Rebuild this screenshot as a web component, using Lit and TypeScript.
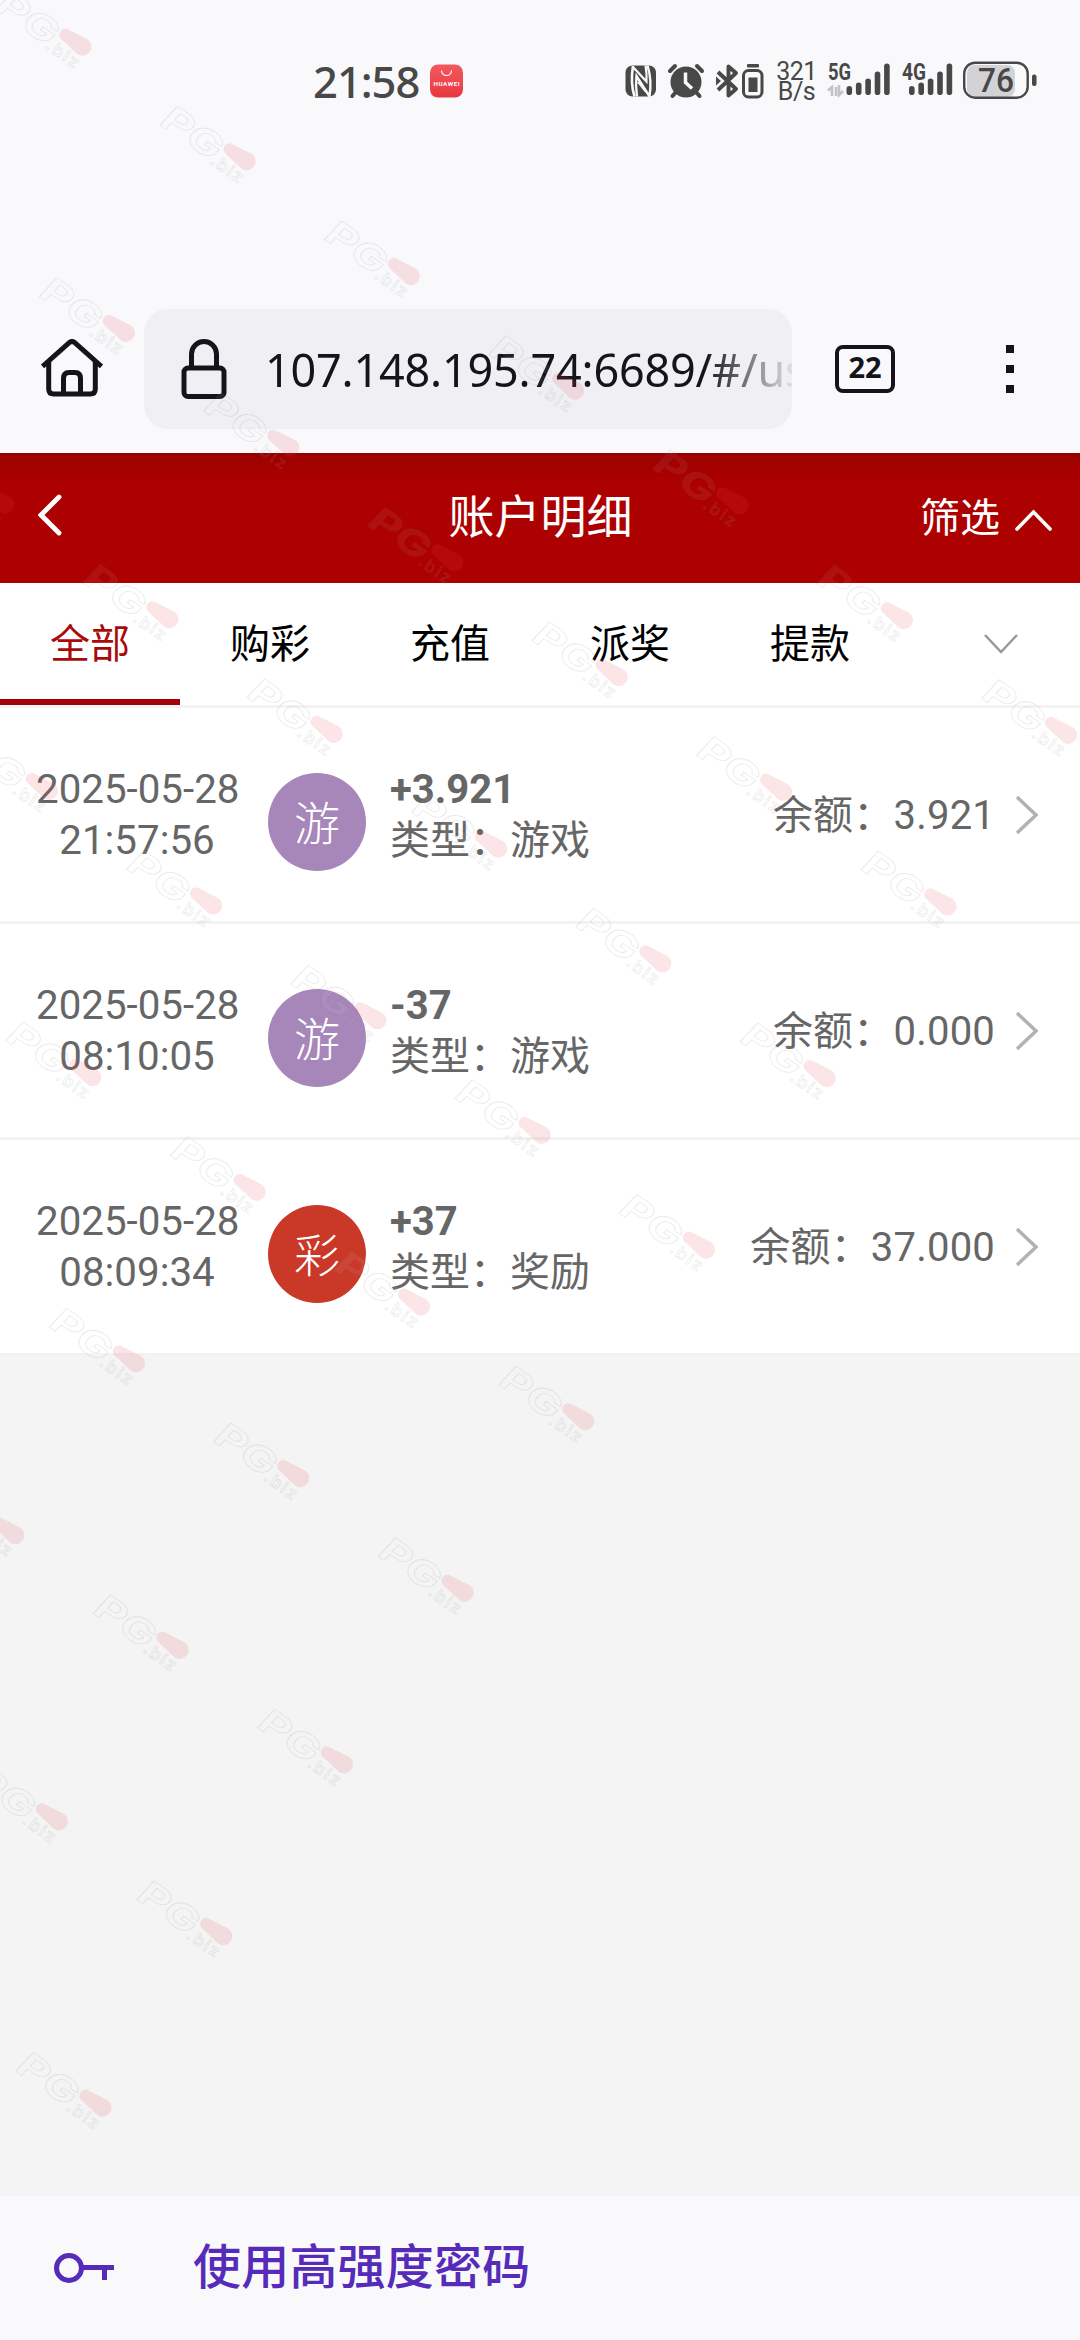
import { LitElement, html, css, svg } from "lit";
import { customElement, property } from "lit/decorators.js";

interface Entry {
  date: string;
  time: string;
  badge: string;
  kind: "game" | "lottery";
  amount: string;
  type: string;
  balance: string;
}

const ENTRIES: Entry[] = [
  { date: "2025-05-28", time: "21:57:56", badge: "游", kind: "game", amount: "+3.921", type: "游戏", balance: "3.921" },
  { date: "2025-05-28", time: "08:10:05", badge: "游", kind: "game", amount: "-37", type: "游戏", balance: "0.000" },
  { date: "2025-05-28", time: "08:09:34", badge: "彩", kind: "lottery", amount: "+37", type: "奖励", balance: "37.000" },
];

const TABS = ["全部", "购彩", "充值", "派奖", "提款"];

@customElement("status-bar")
class StatusBar extends LitElement {
  static styles = css`
    :host { display: block; height: 290px; color: #484848; font-family: "Noto Sans", sans-serif; }
    .bar { display: flex; align-items: center; height: 162px; padding-left: 313px; box-sizing: border-box; }
    .time { width: 117px; font: 500 43.5px/60px "Noto Sans", sans-serif; letter-spacing: -1px; white-space: nowrap; }
    .icons { display: block; flex: none; overflow: visible; }
    .app { margin-right: 162px; }
    .rate { width: 43px; margin-left: 3px; font: 400 25px/20px Roboto, sans-serif; text-align: center; padding-top: 1px; letter-spacing: -0.5px; white-space: nowrap; }
    .signals { margin-left: -3px; }
    svg text { font-family: "Roboto", sans-serif; }
    .net { font-size: 23px; font-weight: 700; }
    .pct { font-size: 34px; font-weight: 500; }
    .brand { font-size: 6.2px; font-weight: 700; }
  `;

  private bars(x: number, tops: number[]) {
    return tops.map((t, i) => svg`<rect x=${x + i * 9.4} y=${t} width="5.6" height=${35 - t} rx="2.8"></rect>`);
  }

  render() {
    return html`<div class="bar">
      <div class="time">21:58</div>
      <svg class="icons app" width="33" height="34" viewBox="0 0 33 34">
        <defs><linearGradient id="g" x2="0" y2="1"><stop stop-color="#f25a5e"/><stop offset="1" stop-color="#e93741"/></linearGradient></defs>
        <rect y="0.5" width="33" height="33" rx="8" fill="url(#g)"/>
        <path d="M11.500 6.500a5 5 0 0 0 10 0" fill="none" stroke="#fff" stroke-width="1.100"/>
        <text class="brand" x="16.500" y="21.500" text-anchor="middle" fill="#fff" textLength="26">HUAWEI</text>
      </svg>
      <svg class="icons" width="147" height="40" viewBox="0 0 147 40" fill="#484848">
        <rect x="0.500" y="4.500" width="30.500" height="31" rx="7"/>
        <path d="M8 5C6.500 14 6.500 26 9.500 35.500" fill="none" stroke="#f9f9fb" stroke-width="2.600"/>
        <path d="M7.500 5.500L21.500 20.500C21.800 15 21.500 10 20.500 4.500" fill="none" stroke="#f9f9fb" stroke-width="2.200"/>
        <path d="M12 35.500C11 29 10.800 21 11.500 15L24.500 35.500C26 26 25.500 14 22.500 4.500" fill="none" stroke="#f9f9fb" stroke-width="2.400"/>
        <path d="M13 21L21 31" fill="none" stroke="#f9f9fb" stroke-width="2"/>
        <circle cx="61" cy="21" r="15.500"/>
        <path d="M51 31L47.500 35M71 31l3.500 4M45 10l5-5M77 10l-5-5" stroke="#484848" stroke-width="4" stroke-linecap="round"/>
        <path d="M60.500 11.500V21.500L67 27.500" fill="none" stroke="#f9f9fb" stroke-width="3.500"/>
        <path d="M93 11L111 28L103.500 34.500V5.500L111 12L93 29" fill="none" stroke="#484848" stroke-width="3.900" stroke-linejoin="round"/>
        <path d="M91 15.500l5 4.500-5 4.500z"/>
        <rect x="118.500" y="9.500" width="18.500" height="26.500" rx="5" fill="none" stroke="#484848" stroke-width="3"/>
        <rect x="122" y="3" width="12" height="3.500" rx="1"/>
        <rect x="123.500" y="16.500" width="9" height="14.500"/>
      </svg>
      <div class="rate">321<br />B/s</div>
      <svg class="icons signals" width="230" height="42" viewBox="0 0 230 42" fill="#484848">
        <text class="net" x="13" y="20" textLength="23" lengthAdjust="spacingAndGlyphs">5G</text>
        <path d="M17 36V27l-4 3.500M21 36V27M24 25v10l4-4" fill="none" stroke="#c3c3c5" stroke-width="2.600"/>
        <g>${this.bars(31.5, [26, 22.500, 18.500, 11.500, 3.500])}</g>
        <text class="net" x="87" y="20" textLength="24" lengthAdjust="spacingAndGlyphs">4G</text>
        <g>${this.bars(94, [26, 22.500, 18.500, 11.500, 3.500])}</g>
        <rect x="152" y="5" width="48" height="32" rx="8" fill="#d3d3d5"/>
        <rect x="149.200" y="2.700" width="63.500" height="35" rx="11" fill="none" stroke="#484848" stroke-width="2.400"/>
        <rect x="217" y="14.500" width="4.500" height="11.500" rx="2"/>
        <text class="pct" x="163" y="32" textLength="36" lengthAdjust="spacingAndGlyphs">76</text>
      </svg>
    </div>`;
  }
}

@customElement("address-bar")
class AddressBar extends LitElement {
  static styles = css`
    :host { display: flex; height: 163px; box-sizing: border-box; padding: 19px 0 24px 41px; align-items: center; color: #15141a; }
    svg { display: block; flex: none; }
    .url {
      display: flex; align-items: center; width: 648px; height: 120px; margin-left: 41px; flex: none;
      background: #f0f0f4; border-radius: 24px; padding-left: 37px; box-sizing: border-box; overflow: hidden;
    }
    .text {
      flex: 1; margin-left: 38px; font: 400 45px/64px "Noto Sans", sans-serif; white-space: nowrap; overflow: hidden;
      letter-spacing: -0.2px; padding-top: 2px;
      -webkit-mask-image: linear-gradient(90deg, #000 440px, rgba(0, 0, 0, 0.08) 527px);
      mask-image: linear-gradient(90deg, #000 440px, rgba(0, 0, 0, 0.08) 527px);
    }
    .count {
      display: flex; align-items: center; justify-content: center; width: 60px; height: 48px; margin-left: 43px;
      border: 4px solid #15141a; border-radius: 8px; box-sizing: border-box; font: 700 29px/40px "Noto Sans", sans-serif;
      padding-bottom: 4px;
    }
    .menu { display: flex; flex-direction: column; gap: 12px; margin-left: 111px; }
    .dot { width: 8px; height: 8px; background: #15141a; }
  `;

  render() {
    return html`
      <svg width="62" height="60" viewBox="0 0 62 60" fill="none" stroke="#15141a" stroke-width="5">
        <path d="M1.500 27.500L28.500 3.500Q31 1.500 33.500 3.500L60.500 27.500"/>
        <path d="M7.700 23V50Q7.700 55 12.700 55H49.300Q54.300 55 54.300 50V23"/>
        <path d="M22.500 54V39.500Q22.500 33.500 28 33.500H34Q39.500 33.500 39.500 39.500V54"/>
      </svg>
      <div class="url">
        <svg width="46" height="62" viewBox="0 0 46 62" fill="none" stroke="#15141a" stroke-width="5">
          <rect x="3" y="30" width="40" height="28.500" rx="4"/>
          <path d="M10.500 30V16a12.500 12.500 0 0 1 25 0V30"/>
        </svg>
        <div class="text">107.148.195.74:6689/#/us</div>
      </div>
      <div class="count">22</div>
      <div class="menu"><div class="dot"></div><div class="dot"></div><div class="dot"></div></div>
    `;
  }
}

@customElement("record-row")
class RecordRow extends LitElement {
  @property({ attribute: false }) entry!: Entry;

  static styles = css`
    :host {
      display: flex; height: 216px; box-sizing: border-box; border-bottom: 3px solid #f3f3f3; background: #fff;
      color: #666; font: 400 40px/51px Roboto, "Noto Sans CJK SC", sans-serif; padding: 0 41px 0 36px;
    }
    .when { width: 202px; text-align: center; padding-top: 56px; font-size: 40.3px; white-space: nowrap; }
    .badge {
      width: 98px; height: 98px; margin: 65px 24px 0 30px; border-radius: 50%; color: #fff; box-sizing: border-box;
      font: 300 46px/94px "Noto Sans CJK SC", sans-serif; text-align: center;
    }
    .game { background: #a786ba; }
    .lottery { background: #ca3927; }
    .info { flex: 1; padding-top: 56px; }
    .amount { font-weight: 700; }
    .balance { padding-top: 82px; letter-spacing: 0.2px; margin-right: 20px; }
    svg { display: block; margin-top: 86px; }
  `;

  render() {
    const e = this.entry;
    return html`
      <div class="when">${e.date}<br />${e.time}</div>
      <div class="badge ${e.kind}">${e.badge}</div>
      <div class="info"><div class="amount">${e.amount}</div><div>类型：${e.type}</div></div>
      <div class="balance">余额：${e.balance}</div>
      <svg width="24" height="42" viewBox="0 0 24 42" fill="none" stroke="#b2b2b2" stroke-width="3.500">
        <path d="M2 3L21 21L2 39"/>
      </svg>
    `;
  }
}

/* Faint brand stamps laid over the whole page on a slanted lattice. */
@customElement("brand-stamps")
class BrandStamps extends LitElement {
  static styles = css`
    :host { position: absolute; inset: 0; pointer-events: none; overflow: hidden; }
    svg { display: block; }
    text { font-family: Inter, sans-serif; font-weight: 700; fill: rgba(255, 255, 255, 0.08); stroke: rgba(110, 110, 110, 0.13); stroke-width: 1; }
    .big { font-size: 35px; }
    .small { font-size: 17px; font-weight: 600; }
    .pill { fill: rgba(236, 70, 85, 0.14); }
  `;

  /* Each lattice line: [line index, first step, last step]. */
  private lines: number[][] = [
    [-5, -10, -4], [-4, -8, -3], [-3, -7, -2], [-2, -5, -1], [-1, -3, 0], [0, -1, 1], [1, 0, 2], [2, 2, 3], [3, 4, 4],
  ];

  render() {
    const marks = this.lines.flatMap(([n, from, to]) =>
      Array.from({ length: to - from + 1 }, (_, i) => [
        293 + 164.3 * (from + i) - 285 * n,
        1473 + 114.7 * (from + i) + 56.9 * n,
      ]),
    );
    return html`<svg width="1080" height="2340" viewBox="0 0 1080 2340">
      ${marks.map(([x, y]) => svg`<g transform="translate(${x} ${y}) rotate(35)">
        <text class="big" transform="translate(-86 20) skewX(-8)" textLength="66" lengthAdjust="spacingAndGlyphs">PG</text>
        <path class="pill" d="M-12 -6L9 -9A9 9 0 0 1 9 9L-12 6A6 6 0 0 1 -12 -6Z"></path>
        <text class="small" x="-21" y="23" textLength="36">.biz</text>
      </g>`)}
    </svg>`;
  }
}

@customElement("app-root")
class AppRoot extends LitElement {
  static styles = css`
    :host {
      display: flex; flex-direction: column; position: relative; width: 1080px; height: 2340px; overflow: hidden;
      background: #f9f9fb; font-family: "Noto Sans CJK SC", sans-serif;
    }
    .header {
      display: grid; grid-template-columns: 1fr auto 1fr; align-items: center; height: 130px; flex: none;
      padding: 0 28px 6px 38px; box-sizing: border-box; color: #fff;
      background: linear-gradient(#970000, #a30000 10px, #ad0000 34px);
    }
    .title { font-size: 46px; line-height: 62px; margin: -4px 0 0 -9px; }
    .filter { display: flex; align-items: center; justify-content: flex-end; gap: 15px; font-size: 40px; line-height: 58px; }
    .caret { margin-top: 10px; }
    svg { display: block; }
    .tabs { display: flex; height: 125px; flex: none; box-sizing: border-box; background: #fff; border-bottom: 3px solid #f3f3f3; }
    .tab {
      width: 180px; box-sizing: border-box; text-align: center; font-size: 40px; line-height: 58px; padding-top: 29px;
      color: #000; border-bottom: 6px solid transparent;
    }
    .active { color: #a90a0a; border-bottom-color: #a3000a; }
    .more { flex: 1; display: flex; justify-content: center; padding: 50px 0 0 22px; }
    .rest { flex: 1; background: #f4f4f4; }
    .prompt {
      display: flex; align-items: center; gap: 78px; height: 144px; flex: none; box-sizing: border-box;
      padding: 0 0 4px 53px; color: #562bb9; font-size: 48px; font-weight: 500; line-height: 70px; letter-spacing: 0.2px;
    }
    .label { padding-bottom: 6px; }
    .key { margin-top: 4px; }
  `;

  render() {
    return html`
      <status-bar></status-bar>
      <address-bar></address-bar>
      <div class="header">
        <svg width="26" height="44" viewBox="0 0 26 44" fill="none" stroke="#fff" stroke-width="4.800" stroke-linecap="round">
          <path d="M21 4L3 22L21 40"/>
        </svg>
        <div class="title">账户明细</div>
        <div class="filter">
          <span>筛选</span>
          <svg class="caret" width="37" height="24" viewBox="0 0 37 24" fill="none" stroke="#fff" stroke-width="3.600" stroke-linecap="round">
            <path d="M2 21L18.500 4L35 21"/>
          </svg>
        </div>
      </div>
      <div class="tabs">
        ${TABS.map((t, i) => html`<div class="tab ${i === 0 ? "active" : ""}">${t}</div>`)}
        <div class="more">
          <svg width="34" height="22" viewBox="0 0 34 22" fill="none" stroke="#999" stroke-width="2.500">
            <path d="M1 2L17 19L33 2"/>
          </svg>
        </div>
      </div>
      ${ENTRIES.map((e) => html`<record-row .entry=${e}></record-row>`)}
      <div class="rest"></div>
      <div class="prompt">
        <svg class="key" width="62" height="32" viewBox="0 0 62 32" fill="none" stroke="#562bb9" stroke-width="5">
          <circle cx="16" cy="16" r="12.500"/>
          <path d="M29 15.500H61M51.500 16V28"/>
        </svg>
        <span class="label">使用高强度密码</span>
      </div>
      <brand-stamps></brand-stamps>
    `;
  }
}
